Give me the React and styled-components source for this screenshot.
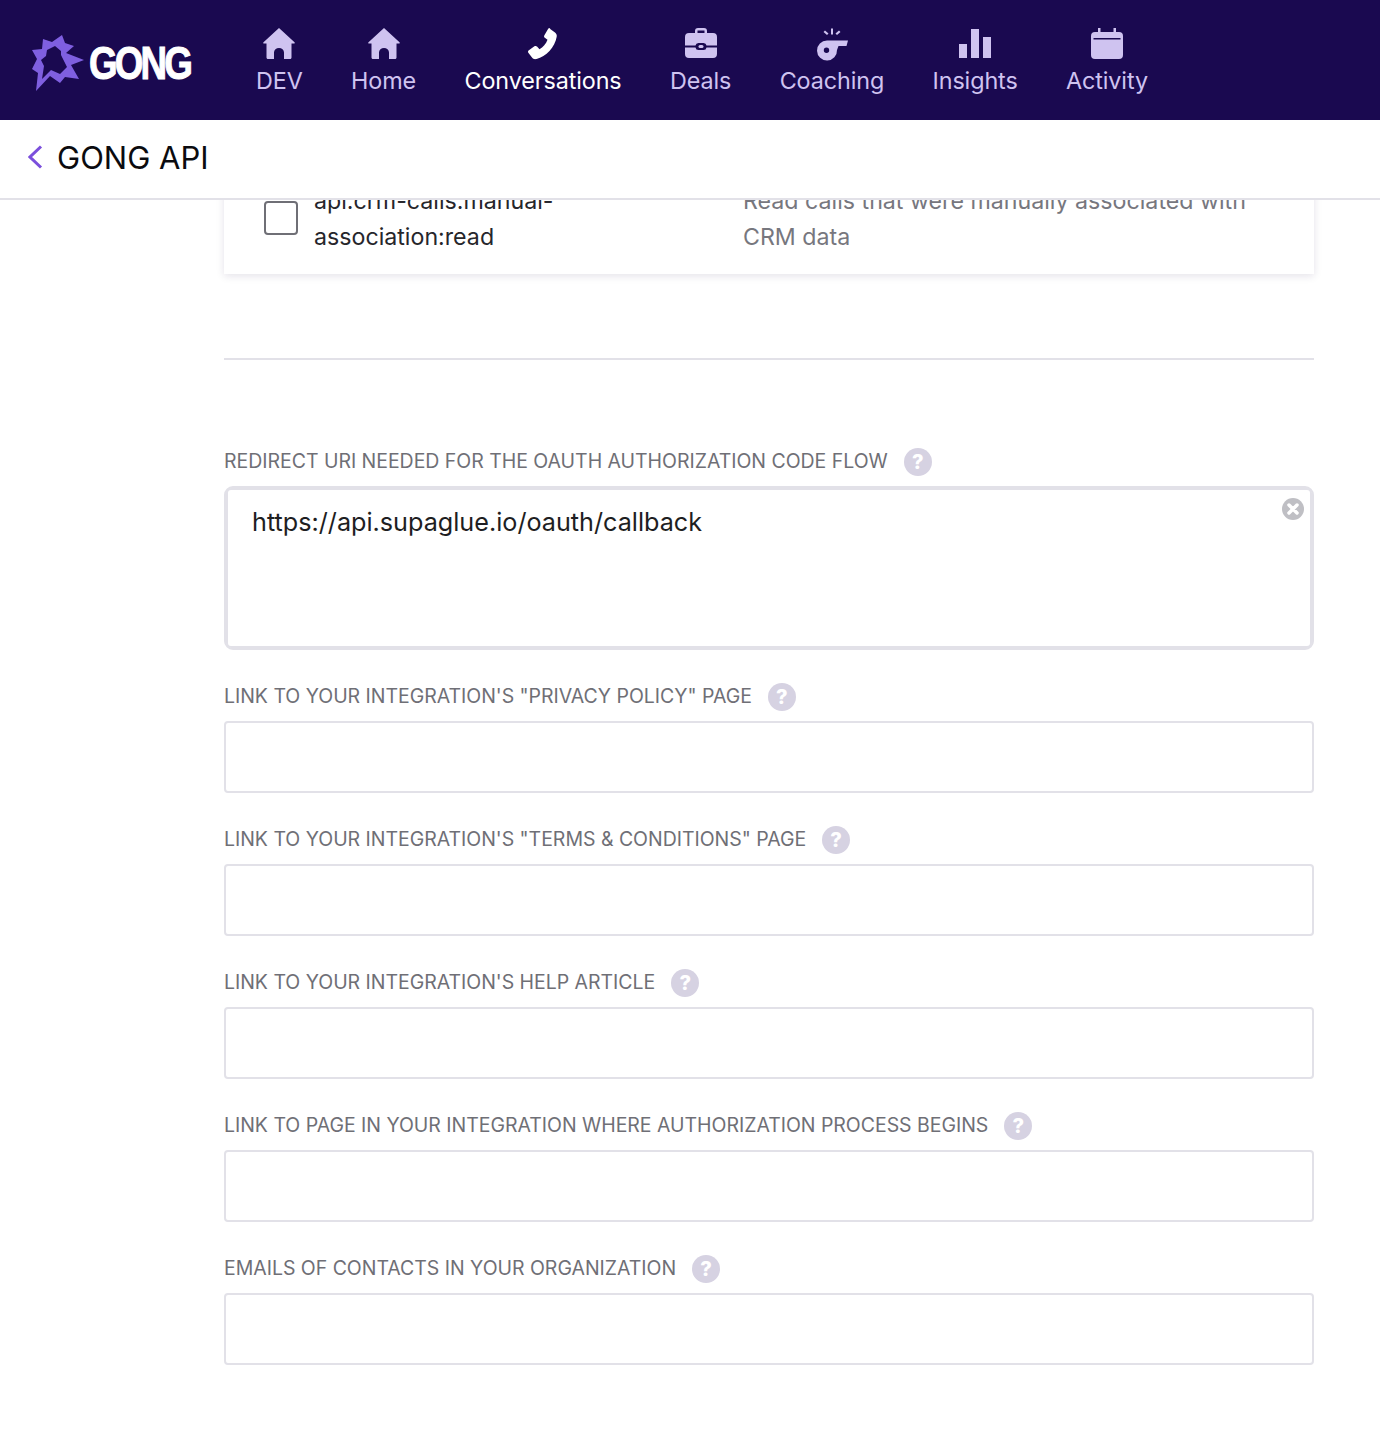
import React from 'react';
import styled, { createGlobalStyle } from 'styled-components';

const GlobalStyle = createGlobalStyle`
	html, body {
		margin: 0;
		padding: 0;
		background: #ffffff;
	}
	* {
		box-sizing: border-box;
	}
	body {
		font-family: Inter, "Noto Sans", sans-serif;
	}
`;

const Page = styled.div`
	height: 1444px;
	display: flex;
	flex-direction: column;
	overflow: hidden;
`;

const Nav = styled.nav`
	height: 120px;
	flex: none;
	background: #1a0950;
	display: flex;
	align-items: flex-start;
	padding-left: 32px;
`;

const Logo = styled.div`
	width: 224px;
	height: 120px;
	flex: none;
	display: flex;
	align-items: flex-start;
	padding-top: 35px;
`;

const LogoMark = styled.svg`
	flex: none;
	width: 52px;
	height: 56px;
`;

const LogoWord = styled.span`
	font-family: "Liberation Sans", sans-serif;
	font-weight: 700;
	font-size: 46px;
	line-height: 56px;
	letter-spacing: -3.6px;
	color: #ffffff;
	margin-left: 5px;
	-webkit-text-stroke: 1px #ffffff;
	transform: scaleX(0.8);
	transform-origin: left center;
`;

const NavItems = styled.div`
	display: flex;
	gap: 48.4px;
`;

const NavItem = styled.a`
	display: flex;
	flex-direction: column;
	align-items: center;
	padding-top: 27px;
	font-size: 23.35px;
	line-height: 30px;
	letter-spacing: -0.1px;
	color: ${(p) => (p.$active ? '#ffffff' : '#cfc3f0')};

	svg {
		display: block;
		width: 34px;
		height: 34px;
		margin-bottom: 5px;
		fill: currentColor;
	}
`;

const SubHeader = styled.header`
	height: 80px;
	flex: none;
	display: flex;
	align-items: center;
	gap: 14px;
	padding: 0 0 2px 28px;
	border-bottom: 2px solid #e2e1e8;
`;

const BackIcon = styled.svg`
	width: 15px;
	height: 24px;
	margin-top: -2px;
	fill: none;
	stroke: #7b4fdc;
	stroke-width: 3;
`;

const PageTitle = styled.h1`
	margin: 0;
	font-size: 31px;
	line-height: 40px;
	font-weight: 400;
	color: #0b0b0f;
`;

const Scroller = styled.main`
	flex: 1;
	overflow: hidden;
	padding: 0 66px 0 224px;
`;

const ScopeCard = styled.div`
	margin-top: -21px;
	height: 95px;
	background: #ffffff;
	box-shadow: 0 2px 8px rgba(30, 20, 70, 0.12);
	display: flex;
	padding: 4px 0 0 40px;
	font-size: 23.2px;
	line-height: 36px;
`;

const Checkbox = styled.span`
	width: 34px;
	height: 34px;
	flex: none;
	margin-top: 18px;
	border: 2px solid #6f6f76;
	border-radius: 4px;
	margin-right: 16px;
`;

const ScopeName = styled.div`
	width: 429px;
	flex: none;
	color: #26262b;
	padding-right: 130px;
`;

const ScopeDescription = styled.div`
	width: 530px;
	color: #77777e;
`;

const Divider = styled.hr`
	margin: 84px 0 87px;
	border: 0;
	border-top: 2px solid #e2e1e8;
`;

const Field = styled.div`
	margin-bottom: 32px;
`;

const LabelRow = styled.div`
	display: flex;
	align-items: center;
	gap: 16px;
	height: 28px;
	margin-bottom: 11px;
`;

const Label = styled.label`
	font-size: 19.5px;
	line-height: 28px;
	letter-spacing: -0.03px;
	color: #6f6f76;
`;

const HelpIcon = styled.span`
	width: 28px;
	height: 28px;
	flex: none;
	margin-top: 2px;
	border-radius: 50%;
	background: #d6d2e2;
	color: #ffffff;
	font-size: 20px;
	font-weight: 800;
	line-height: 28px;
	text-align: center;
`;

const TextInput = styled.div`
	height: 72px;
	border: 2px solid #e2e1e8;
	border-radius: 4px;
`;

const TextAreaBox = styled.div`
	position: relative;
	height: 164px;
	border: 2px solid #e2e1e8;
	border-radius: 9px;
`;

const TextAreaInner = styled.div`
	height: 100%;
	border: 2px solid #e2e1e8;
	border-radius: 5px;
	padding: 14px 24px;
	font-size: 25.2px;
	line-height: 36px;
	color: #1e1e22;
`;

const ClearIcon = styled.svg`
	position: absolute;
	top: 9px;
	right: 7px;
	width: 24px;
	height: 24px;
`;

const HouseIcon = () => (
	<svg viewBox="0 0 34 34">
		<path d="M17 1 1.500 15.200c-.6.6-.3 1.300.5 1.300H4.500V30.500c0 .8.500 1.500 1.500 1.500H12V25.500a5 4.500 0 0 1 10 0V32h6c1 0 1.500-.7 1.500-1.500V16.500H32c.8 0 1.100-.7.5-1.300z" />
	</svg>
);

const PhoneIcon = () => (
	<svg viewBox="0 0 34 34">
		<path d="M23.500 1.500 29 5.500c1.500 1.100 2 2.600 1.700 4.300C29 20 20 30 10.500 32c-2 .4-3.500-.1-4.500-1.500L2.500 26c-.8-1-.6-2 .4-2.700l5.500-4c.9-.6 1.800-.5 2.600.3l2.500 2.600c3.500-2 6.500-5.500 8-9.500l-2.700-2c-.9-.7-1-1.600-.4-2.500l3.800-6.400c.6-1 1.500-1.100 2.300-.3z" />
	</svg>
);

const BriefcaseIcon = () => (
	<svg viewBox="0 0 34 34">
		<path
			fillRule="evenodd"
			d="M11 6V4a3 3 0 0 1 3-3h6a3 3 0 0 1 3 3v2h6a4 4 0 0 1 4 4v8.500H22.500a3 3 0 0 0-3-2.500h-5a3 3 0 0 0-3 2.500H1V10a4 4 0 0 1 4-4zm2.500 0h7V3.500h-7z"
		/>
		<path d="M1 20.500h10.500a3 3 0 0 0 3 2.500h5a3 3 0 0 0 3-2.500H33V27a4 4 0 0 1-4 4H5a4 4 0 0 1-4-4z" />
		<rect x="14.500" y="18" width="5" height="3" rx="1.500" />
	</svg>
);

const WhistleIcon = () => (
	<svg viewBox="0 0 34 34">
		<path
			fillRule="evenodd"
			d="M12 13.500H33L31.500 19H23.500L22 23a10 10 0 1 1-10-9.500zM11.500 20.500a2.700 2.700 0 1 0 0 5.400 2.700 2.700 0 0 0 0-5.400z"
		/>
		<path d="M16 1.500h2V7.500h-2zM8.500 5 10 3.500 13.500 6.500 12 8zM25.500 5 24 3.500 20.500 6.500 22 8z" />
	</svg>
);

const BarsIcon = () => (
	<svg viewBox="0 0 34 34">
		<path d="M1 17h8v14H1zM13 2h8v29h-8zM25 10h8v21h-8z" />
	</svg>
);

const CalendarIcon = () => (
	<svg viewBox="0 0 34 34">
		<path
			fillRule="evenodd"
			d="M8 1h2.500v4h13V1H26v4h3a4 4 0 0 1 4 4v19a4 4 0 0 1-4 4H5a4 4 0 0 1-4-4V9a4 4 0 0 1 4-4h3zM3.500 11v1.500h27V11z"
		/>
	</svg>
);

const NAV_ITEMS = [
	{ label: 'DEV', icon: <HouseIcon /> },
	{ label: 'Home', icon: <HouseIcon /> },
	{ label: 'Conversations', icon: <PhoneIcon />, active: true },
	{ label: 'Deals', icon: <BriefcaseIcon /> },
	{ label: 'Coaching', icon: <WhistleIcon /> },
	{ label: 'Insights', icon: <BarsIcon /> },
	{ label: 'Activity', icon: <CalendarIcon /> },
];

const LINK_FIELDS = [
	'LINK TO YOUR INTEGRATION\'S "PRIVACY POLICY" PAGE',
	'LINK TO YOUR INTEGRATION\'S "TERMS & CONDITIONS" PAGE',
	"LINK TO YOUR INTEGRATION'S HELP ARTICLE",
	'LINK TO PAGE IN YOUR INTEGRATION WHERE AUTHORIZATION PROCESS BEGINS',
	'EMAILS OF CONTACTS IN YOUR ORGANIZATION',
];

const App = () => {
	return (
		<Page>
			<GlobalStyle />
			<Nav>
				<Logo>
					<LogoMark viewBox="0 0 52 56">
						<path
							d="M11 4 20 7 30 0 33 8 42 11 34 18 52 25 39 30 47 44 33 42 28 48 18 41 4 56 6 38 0 34 5 24 0 15 10 14zM23 11 15 15 14 21 9 25 12 31 10 44 19 35 28 39 35 32 29 20 29 16z"
							fill="#7f5fe0"
							fillRule="evenodd"
						/>
					</LogoMark>
					<LogoWord>GONG</LogoWord>
				</Logo>
				<NavItems>
					{NAV_ITEMS.map((item) => (
						<NavItem key={item.label} $active={item.active}>
							{item.icon}
							{item.label}
						</NavItem>
					))}
				</NavItems>
			</Nav>
			<SubHeader>
				<BackIcon viewBox="0 0 15 24">
					<path d="M13 1.500 2 12l11 10.500" />
				</BackIcon>
				<PageTitle>GONG API</PageTitle>
			</SubHeader>
			<Scroller>
				<ScopeCard>
					<Checkbox />
					<ScopeName>api.crm-calls.manual-association:read</ScopeName>
					<ScopeDescription>
						Read calls that were manually associated with CRM data
					</ScopeDescription>
				</ScopeCard>
				<Divider />
				<Field>
					<LabelRow>
						<Label>REDIRECT URI NEEDED FOR THE OAUTH AUTHORIZATION CODE FLOW</Label>
						<HelpIcon>?</HelpIcon>
					</LabelRow>
					<TextAreaBox>
						<TextAreaInner>https://api.supaglue.io/oauth/callback</TextAreaInner>
						<ClearIcon viewBox="0 0 24 24">
							<circle cx="12" cy="12" r="11" fill="#bfbfc4" />
							<path d="M8 8l8 8M16 8l-8 8" stroke="#ffffff" strokeWidth="3.500" strokeLinecap="round" />
						</ClearIcon>
					</TextAreaBox>
				</Field>
				{LINK_FIELDS.map((label) => (
					<Field key={label}>
						<LabelRow>
							<Label>{label}</Label>
							<HelpIcon>?</HelpIcon>
						</LabelRow>
						<TextInput />
					</Field>
				))}
			</Scroller>
		</Page>
	);
};

export default App;
